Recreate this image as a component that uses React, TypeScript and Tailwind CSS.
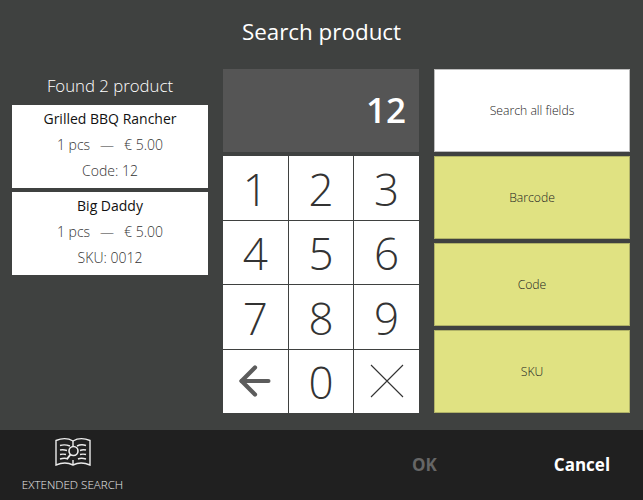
import React from 'react';
import { ArrowLeft } from 'lucide-react';

const products = [
  { name: 'Grilled BBQ Rancher', qty: '1 pcs', price: '€ 5.00', match: 'Code: 12' },
  { name: 'Big Daddy', qty: '1 pcs', price: '€ 5.00', match: 'SKU: 0012' },
];

const keys = ['1', '2', '3', '4', '5', '6', '7', '8', '9', 'back', '0', 'clear'];

const BookIcon = () => (
  <svg width="36" height="32" viewBox="0 0 36 32" fill="none" stroke="#ececec" strokeWidth="1.4">
    <path d="M1 4.500C7 2 13 2 18 5C23 2 29 2 35 4.500V29C29 26.500 23 26.500 18 29C13 26.500 7 26.500 1 29Z" />
    <path d="M18 5V10M18 24V29" />
    <path d="M5 9.500C8 8.500 11 8.500 15 10M5 14C7 13.500 9 13.500 12 14.500M5 18.500C7 18 9 18 11 18.500M5 23C8 22 11 22 13 23" />
    <path d="M31 9.500C28 8.500 25 8.500 22 10M31 14C29 13.500 27 13.500 25 14.500M31 18.500C29 18 27 18 25 18.500M31 23C28 22 25 22 23 23" />
    <circle cx="18.500" cy="15" r="4.500" strokeWidth="1.600" />
    <path d="M15.500 18.500L12 23" strokeWidth="2" />
  </svg>
);

const App: React.FC = () => {
  return (
    <div className="w-[643px] h-[500px] flex flex-col bg-[#3f4140] font-['Open_Sans',sans-serif] overflow-hidden">
      {/* Title */}
      <div className="h-[69px] pb-[6px] flex items-center justify-center text-white text-[22.4px]">
        Search product
      </div>

      <div className="h-[361px] flex gap-[15px] px-[12px]">
        {/* Results */}
        <div className="w-[196px]">
          <div className="h-[36px] pb-[2px] flex items-center justify-center text-white text-[16.8px] font-light">
            Found 2 product
          </div>
          <div className="flex flex-col gap-[4px]">
            {products.map(p => (
              <div key={p.name} className="h-[83px] bg-white flex flex-col items-center text-[14px] text-[#333] font-light">
                <div className="h-[26px] flex items-center text-[#111] font-normal">{p.name}</div>
                <div className="h-[26px] flex items-center gap-[10px]">
                  <span>{p.qty}</span>
                  <span>—</span>
                  <span>{p.price}</span>
                </div>
                <div className="h-[26px] flex items-center">{p.match}</div>
              </div>
            ))}
          </div>
        </div>

        {/* Keypad */}
        <div className="w-[196px]">
          <div className="h-[83px] bg-[#555555] flex items-center justify-end pr-[13px] text-white text-[35px] font-semibold">
            12
          </div>
          <div className="mt-[4px] h-[257px] grid grid-cols-3 grid-rows-4 gap-px bg-[#3f4140]">
            {keys.map(k => (
              <div key={k} className="bg-white flex items-center justify-center text-[#333] text-[44px] font-light">
                {k === 'back' ? (
                  <ArrowLeft size={46} strokeWidth={2.2} className="text-[#5c5c5c]" />
                ) : k === 'clear' ? (
                  <svg width="34" height="34" viewBox="0 0 34 34" stroke="#333" strokeWidth="1.1">
                    <path d="M1 1L33 33M33 1L1 33" />
                  </svg>
                ) : (
                  <span className="pt-[2px]">{k}</span>
                )}
              </div>
            ))}
          </div>
        </div>

        {/* Search fields */}
        <div className="w-[196px] flex flex-col gap-[4px]">
          <div className="h-[83px] pt-[2px] bg-white border border-[#bdbdbd] flex items-center justify-center text-[12.2px] font-light text-[#222]">Search all fields</div>
          {['Barcode', 'Code', 'SKU'].map(f => (
            <div key={f} className="h-[83px] pt-[2px] bg-[#e0e282] border border-[#b0b268] flex items-center justify-center text-[12.2px] font-light text-[#222]">
              {f}
            </div>
          ))}
        </div>
      </div>

      {/* Footer */}
      <div className="h-[70px] bg-[#202020] flex items-center relative">
        <div className="w-[145px] flex flex-col items-center gap-[10px] pb-[3px]">
          <BookIcon />
          <div className="text-[#ececec] text-[11.6px] leading-[14px] font-light">EXTENDED SEARCH</div>
        </div>
        <div className="ml-[267px] text-[#666] text-[17px] font-bold">OK</div>
        <div className="ml-[117px] text-white text-[17px] font-bold">Cancel</div>
      </div>
    </div>
  );
};

export default App;
